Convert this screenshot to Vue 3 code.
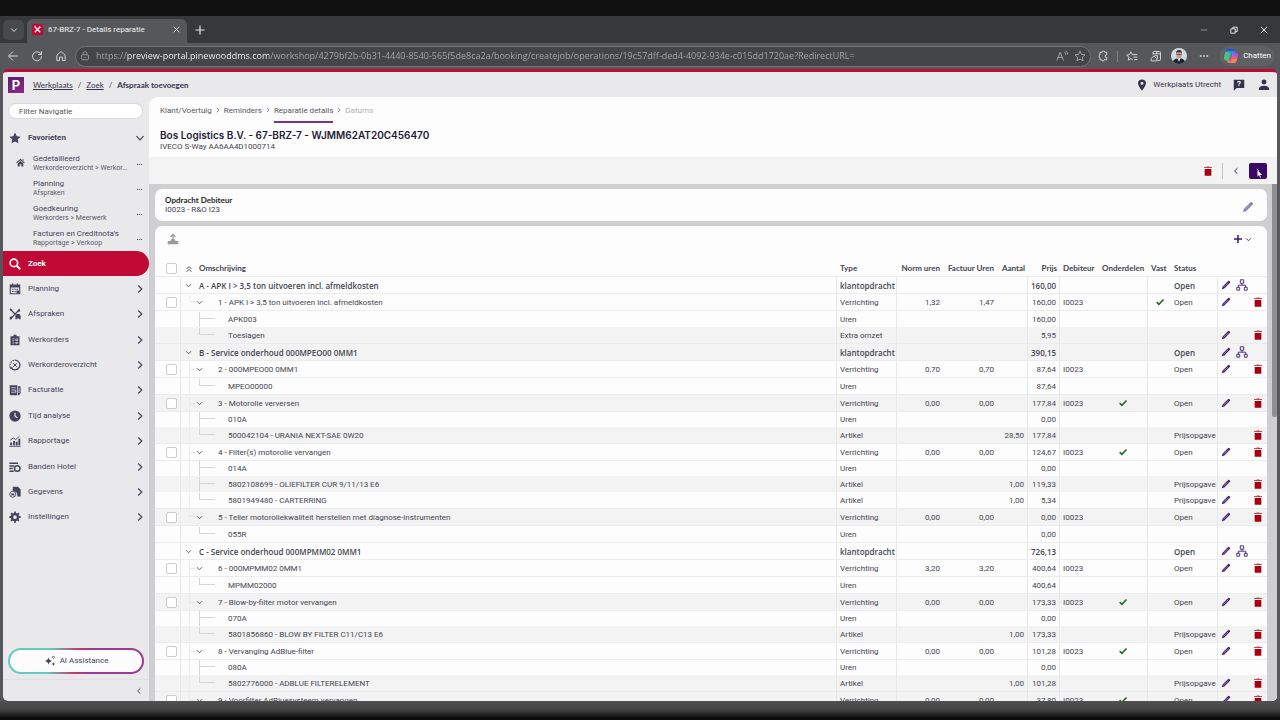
<script setup>
import { ref } from 'vue';

const url = 'https://preview-portal.pinewooddms.com/workshop/4279bf2b-0b31-4440-8540-565f5de8ca2a/booking/createjob/operations/19c57dff-ded4-4092-934e-c015dd1720ae?RedirectURL=';

const filter = ref('');

const favorites = [
  { title: 'Gedetailleerd', path: 'Werkorderoverzicht > Werkorders', home: true },
  { title: 'Planning', path: 'Afspraken' },
  { title: 'Goedkeuring', path: 'Werkorders > Meerwerk' },
  { title: "Facturen en Creditnota's", path: 'Rapportage > Verkoop' }
];

const navItems = [
  { label: 'Zoek', icon: 'search', active: true },
  { label: 'Planning', icon: 'calendar' },
  { label: 'Afspraken', icon: 'tools' },
  { label: 'Werkorders', icon: 'clipboard' },
  { label: 'Werkorderoverzicht', icon: 'overview' },
  { label: 'Facturatie', icon: 'invoice' },
  { label: 'Tijd analyse', icon: 'clock' },
  { label: 'Rapportage', icon: 'chart' },
  { label: 'Banden Hotel', icon: 'tyres' },
  { label: 'Gegevens', icon: 'data' },
  { label: 'Instellingen', icon: 'gear' }
];

const steps = [
  { label: 'Klant/Voertuig' },
  { label: 'Reminders' },
  { label: 'Reparatie details', active: true },
  { label: 'Datums', disabled: true }
];

const group = (text, price, extra = {}) => ({ kind: 'group', text, type: 'klantopdracht', price, status: 'Open', edit: true, tree: true, ...extra });
const job = (text, norm, invoiced, price, extra = {}) => ({ kind: 'job', text, type: 'Verrichting', norm, invoiced, price, debtor: 'I0023', status: 'Open', edit: true, del: true, ...extra });
const hours = (text, price, extra = {}) => ({ kind: 'hours', text, type: 'Uren', price, ...extra });
const part = (text, amount, price, extra = {}) => ({ kind: 'part', text, type: 'Artikel', amount, price, status: 'Prijsopgave', edit: true, del: true, ...extra });

// trunk: line down from the group, end: last child of its job
const rows = [
  group('A - APK I > 3,5 ton uitvoeren incl. afmeldkosten', '160,00'),
  job('1 - APK I > 3,5 ton uitvoeren incl. afmeldkosten', '1,32', '1,47', '160,00', { fixed: true, last: true }),
  hours('APK003', '160,00'),
  part('Toeslagen', '', '5,95', { type: 'Extra omzet', status: '', end: true, shade: true }),
  group('B - Service onderhoud 000MPEO00 0MM1', '390,15', { shade: true }),
  job('2 - 000MPEO00 0MM1', '0,70', '0,70', '87,64'),
  hours('MPEO00000', '87,64', { trunk: true, end: true }),
  job('3 - Motorolie verversen', '0,00', '0,00', '177,84', { parts: true, shade: true }),
  hours('010A', '0,00', { trunk: true }),
  part('500042104 - URANIA NEXT-SAE 0W20', '28,50', '177,84', { trunk: true, end: true, edit: false, shade: true }),
  job('4 - Filter(s) motorolie vervangen', '0,00', '0,00', '124,67', { parts: true }),
  hours('014A', '0,00', { trunk: true }),
  part('5802108699 - OLIEFILTER CUR 9/11/13 E6', '1,00', '119,33', { trunk: true, shade: true }),
  part('5801949480 - CARTERRING', '1,00', '5,34', { trunk: true, end: true }),
  job('5 - Teller motoroliekwaliteit herstellen met diagnose-instrumenten', '0,00', '0,00', '0,00', { last: true, shade: true }),
  hours('055R', '0,00', { end: true }),
  group('C - Service onderhoud 000MPMM02 0MM1', '726,13'),
  job('6 - 000MPMM02 0MM1', '3,20', '3,20', '400,64'),
  hours('MPMM02000', '400,64', { trunk: true, end: true }),
  job('7 - Blow-by-filter motor vervangen', '0,00', '0,00', '173,33', { parts: true, shade: true }),
  hours('070A', '0,00', { trunk: true }),
  part('5801856860 - BLOW BY FILTER C11/C13 E6', '1,00', '173,33', { trunk: true, end: true, shade: true }),
  job('8 - Vervanging AdBlue-filter', '0,00', '0,00', '101,28', { parts: true }),
  hours('080A', '0,00', { trunk: true }),
  part('5802776000 - ADBLUE FILTERELEMENT', '1,00', '101,28', { trunk: true, end: true, shade: true }),
  job('9 - Voorfilter AdBluesysteem vervangen', '0,00', '0,00', '37,80', { parts: true, shade: true })
];
</script>

<template>
  <div class="desktop">
    <svg class="sprite" aria-hidden="true">
      <symbol id="chev-down" viewBox="0 0 10 10"><path d="M1.5 3.2 5 6.8l3.500-3.600" class="ln" /></symbol>
      <symbol id="chev-right" viewBox="0 0 10 10"><path d="M3.200 1.500 6.800 5 3.200 8.500" class="ln" /></symbol>
      <symbol id="chev-left" viewBox="0 0 10 10"><path d="M6.800 1.500 3.200 5l3.600 3.500" class="ln" /></symbol>
      <symbol id="chev-up2" viewBox="0 0 10 10"><path d="M2 5l3-3 3 3M2 8.500l3-3 3 3" class="ln" /></symbol>
      <symbol id="close" viewBox="0 0 10 10"><path d="M1 1l8 8M9 1 1 9" class="ln" /></symbol>
      <symbol id="plus" viewBox="0 0 10 10"><path d="M5 .5v9M.5 5h9" class="ln" /></symbol>
      <symbol id="plus-bold" viewBox="0 0 8 8"><path d="M4 0v8M0 4h8" stroke="currentColor" stroke-width="1.500" /></symbol>
      <symbol id="dots" viewBox="0 0 12 12"><path d="M1 5h2v2H1zM5 5h2v2H5zM9 5h2v2H9z" fill="currentColor" /></symbol>
      <symbol id="dots-small" viewBox="0 0 6 6"><path d="M0 4h1v1H0zM2 4h1v1H2zM4 4h1v1H4z" fill="currentColor" /></symbol>
      <symbol id="back" viewBox="0 0 16 16"><path d="M15 8H2M8 2 2 8l6 6" class="ln" /></symbol>
      <symbol id="reload" viewBox="0 0 16 16"><path d="M13.500 6A6 6 0 1 0 14 8.500M14 1.500V6H9.500" class="ln" /></symbol>
      <symbol id="house" viewBox="0 0 16 16"><path d="M2.500 7 8 2l5.500 5v7H10v-4.500H6V14H2.500z" class="ln" /></symbol>
      <symbol id="lock" viewBox="0 0 16 16"><rect x="2.500" y="6" width="11" height="8" rx="1.500" class="ln" /><path d="M5 6V4a3 3 0 0 1 6 0v2" class="ln" /><circle cx="8" cy="10" r="1" fill="currentColor" /></symbol>
      <symbol id="read" viewBox="0 0 16 16"><path d="M1 14 5.500 3 10 14M2.800 10h5.500M11 2.500q2 1.500 2 4M13 1q2.500 2 2.500 5" class="ln" /></symbol>
      <symbol id="star-line" viewBox="0 0 16 16"><path d="m8 1.500 2 4.300 4.700.6-3.500 3.200.9 4.700L8 12l-4.100 2.300.9-4.700L1.300 6.400 6 5.800z" class="ln" /></symbol>
      <symbol id="puzzle" viewBox="0 0 16 16"><path d="M4 3h3a1.700 1.700 0 0 1 3.400 0H13v3.500a1.800 1.800 0 1 0 0 3.500v3H9.500a1.700 1.700 0 0 1-3.400 0H4V10a1.800 1.800 0 0 1 0-3.500z" class="ln" /></symbol>
      <symbol id="fav-list" viewBox="0 0 16 16"><path d="M9 13 6.500 11.500 3 13.500l.8-4L1 6.700l3.700-.5L6.500 2.500l1.800 3.700H15M10 9.500h5M11 12.800h4" class="ln" /></symbol>
      <symbol id="app-open" viewBox="0 0 16 16"><path d="M4 6V3.500Q4 2 5.500 2h7Q14 2 14 3.500v9q0 1.500-1.500 1.500H10M4 5h10M9 2v3" class="ln" /><path d="M1.500 14.500v-3L5 8l4 3.500v3zM6 7.500h4v4" class="ln" /></symbol>
      <symbol id="minimize" viewBox="0 0 10 10"><path d="M1 5h8" class="ln" /></symbol>
      <symbol id="restore" viewBox="0 0 10 10"><path d="M1 3.500h5.500V9H1zM3.500 3.500v-2H9V7H6.500" class="ln" /></symbol>
      <symbol id="star" viewBox="0 0 16 16"><path d="m8 .8 2.300 4.700 5.200.7-3.800 3.600.9 5.200L8 12.500 3.400 15l.9-5.200L.5 6.200l5.200-.7z" fill="currentColor" /></symbol>
      <symbol id="home" viewBox="0 0 16 16"><path d="M8 1.500 15.500 8l-1.200 1.300L8 4 1.700 9.300.5 8zM8 5.500l5 4.200V15H9.500v-4h-3v4H3V9.700zM11.500 2h2v3l-2-1.700z" fill="currentColor" /></symbol>
      <symbol id="search" viewBox="0 0 16 16"><circle cx="6.500" cy="6.500" r="5" fill="none" stroke="currentColor" stroke-width="2.200" /><path d="m10.300 10.300 4.700 4.700" stroke="currentColor" stroke-width="2.600" /></symbol>
      <symbol id="calendar" viewBox="0 0 16 16"><path d="M1 2h3V.5h1.500V2h5V.5H12V2h3v13H1zm1.500 4v7.500h11V6z" fill="currentColor" fill-rule="evenodd" /><path d="M4 7.500h2V9H4zm3 0h2V9H7zm3 0h2V9h-2zm-6 3h2V12H4zm3 0h2V12H7zm3-.5h3.500v3.500H10z" fill="currentColor" /></symbol>
      <symbol id="tools" viewBox="0 0 16 16"><path d="m2 2 7 7M14 2 3 13.500" stroke="currentColor" stroke-width="1.600" fill="none" /><path d="M.5 1.500 2 .5l2.500 2.300-1.500 1.500zM11.500 2.500 14.500.5 13.500 3l2 .5-3 2zM1 12l2.500-1 1 1-1 3-2.500.5zM8.500 10.500 10 8h4l1.500 2.500v4.500h-2v-1h-3v1h-2z" fill="currentColor" /></symbol>
      <symbol id="clipboard" viewBox="0 0 16 16"><path d="M2 3h4V1h4v2h4v12H2z" fill="currentColor" /><path d="M4.500 6.500h3M4.500 9h2.500M4.500 12H7M9 6.500h2.500v2.300H9zM9 11h2.500v1.500H9z" stroke="#e9e9ec" fill="none" stroke-width=".9" /></symbol>
      <symbol id="overview" viewBox="0 0 16 16"><path d="M1.500 8a6.500 6.500 0 0 1 6.500-6.500" fill="none" stroke="currentColor" stroke-width="1.500" stroke-dasharray="2 1.200" /><path d="M8 1.500A6.500 6.500 0 1 1 2.500 11.500" fill="none" stroke="currentColor" stroke-width="1.700" /><path d="m5.500 5.500 5 5M10.500 5.500l-5 5M1 9l1 3.500 3-1" stroke="currentColor" stroke-width="1.300" fill="none" /></symbol>
      <symbol id="invoice" viewBox="0 0 16 16"><path d="M1 1.500h10V15H2.500Q1 15 1 13.500zM12 3h2q1.500 0 1.500 1.500V12l-2 3H12z" fill="currentColor" /><path d="M3 5h6M3 8h6v3H3M13.500 5v7" stroke="#e9e9ec" stroke-width="1" fill="none" /></symbol>
      <symbol id="clock" viewBox="0 0 16 16"><circle cx="8" cy="8" r="7.500" fill="currentColor" /><path d="M8 3.500V8l3.200 2.500" stroke="#e9e9ec" stroke-width="1.600" fill="none" /></symbol>
      <symbol id="chart" viewBox="0 0 16 16"><path d="M1.500 10H4v4H1.500zM5.500 8H8v6H5.500zM9 9h2.500v5H9zM12.500 5H15v9h-2.500zM.5 14.500h15v1H.5z" fill="currentColor" /><path d="m1.500 7 4-3 3.500 2 5-4.500" stroke="currentColor" fill="none" stroke-width="1.200" /></symbol>
      <symbol id="tyres" viewBox="0 0 16 16"><path d="M.5 2H12v2H.5zM.5 5.500H7v2H.500zM.5 9h4.500v2H.5zM.500 12.500h6v2h-6z" fill="currentColor" /><circle cx="11" cy="10" r="3.700" fill="none" stroke="currentColor" stroke-width="2" /></symbol>
      <symbol id="data" viewBox="0 0 16 16"><path d="M5 1h7l3.500 3.500V14H11q1-7-6-7z" fill="currentColor" /><circle cx="5" cy="11" r="4" fill="none" stroke="currentColor" stroke-width="1.200" /><path d="M3 10h4v2.500H3z" fill="currentColor" /></symbol>
      <symbol id="gear" viewBox="0 0 16 16"><circle cx="8" cy="8" r="4" fill="none" stroke="currentColor" stroke-width="3" /><path d="M8 .5v3M8 12.500v3M.5 8h3M12.500 8h3M2.700 2.700l2 2M11.300 11.300l2 2M13.300 2.700l-2 2M4.700 11.300l-2 2" stroke="currentColor" stroke-width="2.400" /></symbol>
      <symbol id="sparkles" viewBox="0 0 16 16"><path d="M6 3q.7 4.300 5 5-4.300.7-5 5-.7-4.300-5-5 4.300-.7 5-5zM12.500 9.500q.4 2.100 2.500 2.500-2.100.4-2.500 2.500-.4-2.100-2.500-2.500 2.100-.4 2.500-2.500z" fill="currentColor" /><path d="M12.500 1.200 14.300 3l-1.800 1.800L10.700 3z" fill="none" stroke="currentColor" /></symbol>
      <symbol id="pin" viewBox="0 0 16 16"><path d="M8 .5a5.300 5.300 0 0 1 5.300 5.300C13.300 9.500 8 15.500 8 15.500S2.700 9.500 2.700 5.800A5.300 5.300 0 0 1 8 .5zm0 3.300a2 2 0 1 0 0 4 2 2 0 0 0 0-4z" fill="currentColor" /></symbol>
      <symbol id="bubble" viewBox="0 0 16 16"><path d="M1 1h14v11H5l-4 3.500z" fill="currentColor" /></symbol>
      <symbol id="person" viewBox="0 0 16 16"><circle cx="8" cy="4" r="3.300" fill="currentColor" /><path d="M1 14.500q0-5.500 7-5.500t7 5.500z" fill="currentColor" /></symbol>
      <symbol id="trash" viewBox="0 0 12 12"><path d="M2 3.500h8V11q0 .6-.6.6H2.600Q2 11.600 2 11z" fill="#a80010" /><path d="M1.300 1.300H4L4.600.6h2.800l.6.700h2.700v1.200H1.300z" fill="#c4414c" /></symbol>
      <symbol id="pencil" viewBox="0 0 12 12"><path d="M1 11l.8-3L8.600 1.200q.6-.5 1.200 0l1 1q.5.6 0 1.200L4 10.200z" fill="currentColor" /><path d="M3 8.800 8.500 3.300" stroke="#b9a9cc" stroke-width=".8" /></symbol>
      <symbol id="sitemap" viewBox="0 0 12 12"><path d="M4.300.8h3.400v3.400H4.300zM.8 8.300h2.900v2.900H.8zM8.300 8.300h2.900v2.900H8.300zM6 4.200v2M2.300 8.300V6.200h7.400v2.100" fill="none" stroke="currentColor" stroke-width=".9" /></symbol>
      <symbol id="check" viewBox="0 0 12 12"><path d="m2 6.200 2.700 2.600L10.200 3" fill="none" stroke="#1d6b23" stroke-width="1.900" /></symbol>
      <symbol id="upload" viewBox="0 0 12 12"><path d="M.8 8h2.700L4.500 6h3l1 2h2.700v3.300H.8z" fill="currentColor" /><path d="M6 8V1.500M3.500 4 6 1.400 8.500 4" fill="none" stroke="currentColor" stroke-width="1.300" /></symbol>
    </svg>

    <div class="browser">
      <div class="tab-strip">
        <button class="tab-menu" aria-label="Tabs"><svg class="ico8"><use href="#chev-down" /></svg></button>
        <div class="tab">
          <svg class="tab-logo" viewBox="0 0 12 12"><rect width="12" height="12" rx="1" fill="#c00a35" /><path d="M3 3l6 6M9 3 3 9" stroke="#fff" stroke-width="1.300" /><path d="M2.500 2.500h1.500M8 2.300l1.500 1.500" stroke="#fff" /></svg>
          <span class="tab-title">67-BRZ-7 - Details reparatie</span>
          <button class="plain" aria-label="Sluiten"><svg class="ico7"><use href="#close" /></svg></button>
        </div>
        <button class="plain new-tab" aria-label="Nieuw tabblad"><svg class="ico10"><use href="#plus" /></svg></button>
        <div class="window-buttons">
          <button class="plain dim" aria-label="Minimaliseren"><svg class="ico8"><use href="#minimize" /></svg></button>
          <button class="plain" aria-label="Herstellen"><svg class="ico8"><use href="#restore" /></svg></button>
          <button class="plain" aria-label="Venster sluiten"><svg class="ico8"><use href="#close" /></svg></button>
        </div>
      </div>

      <div class="address-bar">
        <button class="plain" aria-label="Terug"><svg class="ico12"><use href="#back" /></svg></button>
        <button class="plain" aria-label="Vernieuwen"><svg class="ico12"><use href="#reload" /></svg></button>
        <button class="plain" aria-label="Start"><svg class="ico12"><use href="#house" /></svg></button>
        <div class="url-box">
          <svg class="ico10"><use href="#lock" /></svg>
          <input class="url-input" type="text" :value="url" aria-label="Adres" readonly />
          <svg class="ico12"><use href="#read" /></svg>
          <svg class="ico12"><use href="#star-line" /></svg>
        </div>
        <button class="plain" aria-label="Extensies"><svg class="ico12"><use href="#puzzle" /></svg></button>
        <span class="bar-split"></span>
        <button class="plain" aria-label="Favorieten"><svg class="ico12"><use href="#fav-list" /></svg></button>
        <button class="plain" aria-label="App"><svg class="ico12"><use href="#app-open" /></svg></button>
        <svg class="avatar" viewBox="0 0 16 16">
          <clipPath id="face"><circle cx="8" cy="8" r="8" /></clipPath>
          <g clip-path="url(#face)">
            <rect width="16" height="16" fill="#cfdbe4" />
            <path d="M1 16q1-5 5-5.500h4q4 .5 5 5.500z" fill="#1c2330" />
            <path d="M6.500 10h3L8 14z" fill="#f4f4f4" />
            <ellipse cx="8" cy="6.800" rx="2.700" ry="3.600" fill="#c99a86" />
            <path d="M5 6q-.3-4 3-4t3 4l-.8-1.800H5.800z" fill="#3a2a26" />
            <path d="M5.500 6.500h5" stroke="#444" stroke-width=".7" />
          </g>
        </svg>
        <button class="plain" aria-label="Meer"><svg class="ico10"><use href="#dots" /></svg></button>
        <button class="copilot">
          <svg class="copilot-logo" viewBox="0 0 16 16">
            <path d="M5 1h5q1.500 0 2 2l.5 2H9L6.500 12.500H3Q.5 12.500 1 9.500L2.500 3Q3 1 5 1z" fill="#2a8df0" />
            <path d="M2.500 3 1 9.500q-.5 3 2 3h2.500L7.500 5z" fill="#4fc26b" />
            <path d="M5 1h5q1.500 0 2 2H5.500L2.500 4Q3 1 5 1z" fill="#2456d8" />
            <path d="M11 15H6q-1.500 0-2-2l-.2-.5H7L9.500 5H13q2.500 0 2 2.500L13.500 13q-.5 2-2.500 2z" fill="#e557a6" />
            <path d="M4 12.500h3L6.500 15H6q-1.500 0-2-2.500zM11 15H7l2.500-4 4.500-.5-.5 2.500q-.5 2-2.500 2z" fill="#f58a3c" />
            <path d="M9.500 5H13q2.500 0 2 2.500L14.500 9 10 7z" fill="#8f5be8" />
          </svg>
          <span>Chatten</span>
        </button>
      </div>

      <div class="app">
        <header class="app-header">
          <span class="logo">P</span>
          <nav class="crumbs">
            <a href="#">Werkplaats</a><span>/</span><a href="#">Zoek</a><span>/</span><strong>Afspraak toevoegen</strong>
          </nav>
          <div class="header-tools">
            <svg class="ico12"><use href="#pin" /></svg>
            <span class="location">Werkplaats Utrecht</span>
            <button class="plain help" aria-label="Help"><svg class="ico12"><use href="#bubble" /></svg><span>?</span></button>
            <button class="plain" aria-label="Gebruiker"><svg class="ico12"><use href="#person" /></svg></button>
          </div>
        </header>

        <div class="app-body">
          <aside class="sidebar">
            <input v-model="filter" class="nav-filter" type="text" placeholder="Filter Navigatie" aria-label="Filter Navigatie" />
            <button class="fav-toggle">
              <svg class="ico12"><use href="#star" /></svg>
              <span>Favorieten</span>
              <svg class="ico10"><use href="#chev-down" /></svg>
            </button>
            <ul class="fav-list">
              <li v-for="fav in favorites" :key="fav.title">
                <span class="fav-mark"><svg v-if="fav.home" class="ico9"><use href="#home" /></svg></span>
                <a href="#">
                  <span class="fav-title">{{ fav.title }}</span>
                  <span class="fav-path">{{ fav.path }}</span>
                </a>
                <button class="plain" :aria-label="'Opties ' + fav.title"><svg class="ico6"><use href="#dots-small" /></svg></button>
              </li>
            </ul>
            <nav class="nav-list">
              <a v-for="item in navItems" :key="item.label" href="#" :class="['nav-item', { active: item.active }]">
                <svg class="ico12"><use :href="'#' + item.icon" /></svg>
                <span>{{ item.label }}</span>
                <svg v-if="!item.active" class="ico10"><use href="#chev-right" /></svg>
              </a>
            </nav>
            <div class="assist-box">
              <button class="assist"><svg class="ico12"><use href="#sparkles" /></svg>AI Assistance</button>
            </div>
            <div class="side-foot">
              <button class="plain" aria-label="Menu inklappen"><svg class="ico8"><use href="#chev-left" /></svg></button>
            </div>
          </aside>

          <main class="main">
            <div class="page-head">
              <nav class="steps">
                <template v-for="(step, i) in steps" :key="step.label">
                  <svg v-if="i" class="ico6"><use href="#chev-right" /></svg>
                  <a href="#" :class="{ active: step.active, disabled: step.disabled }">{{ step.label }}</a>
                </template>
              </nav>
              <h1>Bos Logistics B.V. - 67-BRZ-7 - WJMM62AT20C456470</h1>
              <p>IVECO S-Way AA6AA4D1000714</p>
            </div>

            <div class="action-bar">
              <button class="plain" aria-label="Verwijderen"><svg class="ico10"><use href="#trash" /></svg></button>
              <span class="action-split"></span>
              <button class="plain prev" aria-label="Vorige"><svg class="ico8"><use href="#chev-left" /></svg></button>
              <button class="next" aria-label="Volgende">
                <svg class="ico6"><use href="#chev-right" /></svg>
                <svg class="cursor" viewBox="0 0 8 12"><path d="M.5.5v9l2.200-1.800 1.400 3.500 1.500-.6-1.500-3.300h3z" fill="#fff" stroke="#222" stroke-width=".4" /></svg>
              </button>
            </div>

            <div class="content">
              <div class="cards">
                <section class="card debtor">
                  <div>
                    <h2>Opdracht Debiteur</h2>
                    <p>I0023 - R&amp;O I23</p>
                  </div>
                  <button class="plain edit-debtor" aria-label="Bewerken"><svg class="ico12"><use href="#pencil" /></svg></button>
                </section>

                <section class="card jobs">
                  <div class="jobs-bar">
                    <button class="plain upload" aria-label="Uploaden"><svg class="ico12"><use href="#upload" /></svg></button>
                    <button class="plain add" aria-label="Toevoegen"><svg class="ico8"><use href="#plus-bold" /></svg><svg class="ico7"><use href="#chev-down" /></svg></button>
                  </div>
                  <table>
                    <colgroup>
                      <col class="c-check" /><col /><col class="c-type" /><col class="c-norm" /><col class="c-fact" /><col class="c-amount" />
                      <col class="c-price" /><col class="c-debtor" /><col class="c-parts" /><col class="c-fixed" /><col class="c-status" /><col class="c-actions" />
                    </colgroup>
                    <thead>
                      <tr>
                        <th class="check"><input type="checkbox" aria-label="Alles selecteren" /></th>
                        <th><div class="tree"><span class="toggle"><svg class="ico8"><use href="#chev-up2" /></svg></span>Omschrijving</div></th>
                        <th>Type</th>
                        <th class="num">Norm uren</th>
                        <th class="num">Factuur Uren</th>
                        <th class="num">Aantal</th>
                        <th class="num">Prijs</th>
                        <th>Debiteur</th>
                        <th>Onderdelen</th>
                        <th>Vast</th>
                        <th>Status</th>
                        <th></th>
                      </tr>
                    </thead>
                    <tbody>
                      <tr v-for="(row, i) in rows" :key="i" :class="[row.kind, { shade: row.shade }]">
                        <td class="check line"><input v-if="row.kind === 'job'" type="checkbox" :aria-label="row.text" /></td>
                        <td class="line">
                          <div class="tree">
                            <button v-if="row.kind === 'group'" class="plain toggle" aria-label="Inklappen"><svg class="ico7"><use href="#chev-down" /></svg></button>
                            <template v-else-if="row.kind === 'job'">
                              <span :class="['trunk joint', { half: row.last }]"></span>
                              <button class="plain toggle job-toggle" aria-label="Inklappen"><svg class="ico7"><use href="#chev-down" /></svg></button>
                            </template>
                            <template v-else>
                              <span :class="['trunk', { empty: !row.trunk }]"></span>
                              <span :class="['branch', { half: row.end }]"></span>
                            </template>
                            <span>{{ row.text }}</span>
                          </div>
                        </td>
                        <td class="line">{{ row.type }}</td>
                        <td class="num">{{ row.norm }}</td>
                        <td class="num">{{ row.invoiced }}</td>
                        <td class="num line">{{ row.amount }}</td>
                        <td class="num line">{{ row.price }}</td>
                        <td>{{ row.debtor }}</td>
                        <td class="mark line"><svg v-if="row.parts" class="ico10"><use href="#check" /></svg></td>
                        <td class="mark"><svg v-if="row.fixed" class="ico10"><use href="#check" /></svg></td>
                        <td class="line">{{ row.status }}</td>
                        <td class="actions">
                          <div>
                            <button v-if="row.edit" class="plain a-edit" aria-label="Bewerken"><svg class="ico10"><use href="#pencil" /></svg></button>
                            <button v-if="row.tree" class="plain a-tree" aria-label="Structuur"><svg class="ico12"><use href="#sitemap" /></svg></button>
                            <button v-if="row.del" class="plain a-del" aria-label="Verwijderen"><svg class="ico10"><use href="#trash" /></svg></button>
                          </div>
                        </td>
                      </tr>
                    </tbody>
                  </table>
                </section>
              </div>
              <div class="scrollbar"><div class="thumb"></div></div>
            </div>
          </main>
        </div>
      </div>
    </div>
  </div>
</template>

<style>
body {
  margin: 0;
  background: #111;
}
</style>

<style scoped>
.desktop {
  height: 100vh;
  box-sizing: border-box;
  padding: 16px 0 0;
  display: flex;
  flex-direction: column;
  background: #111;
  color: #45454f;
  font: 8px/12px Roboto, "Open Sans", sans-serif;
}

.desktop *,
.desktop *::before {
  box-sizing: border-box;
}

.sprite {
  display: none;
}

.ln {
  fill: none;
  stroke: currentColor;
  stroke-width: 1.2;
}

svg {
  display: block;
  flex: none;
}

.ico6 { width: 6px; height: 6px; }
.ico7 { width: 7px; height: 7px; }
.ico8 { width: 8px; height: 8px; }
.ico9 { width: 9px; height: 9px; }
.ico10 { width: 10px; height: 10px; }
.ico12 { width: 12px; height: 12px; }

button,
input {
  font: inherit;
  color: inherit;
}

a {
  color: inherit;
  text-decoration: none;
}

h1,
h2,
p,
ul {
  margin: 0;
  padding: 0;
}

.plain {
  display: flex;
  align-items: center;
  justify-content: center;
  padding: 0;
  border: none;
  background: none;
}

/* Browser */
.browser {
  flex: 1;
  min-height: 0;
  display: flex;
  flex-direction: column;
  padding-bottom: 19px;
  background: linear-gradient(to top, #0c0c0c 2px, #484848 11px, #4f5052 19px, #55575a 22px);
}

.tab-strip {
  display: flex;
  align-items: center;
  height: 27px;
  padding: 3px 10px 0 3px;
  background: #37383a;
  color: #e6e6e6;
}

.tab-menu {
  display: flex;
  align-items: center;
  justify-content: center;
  width: 21px;
  height: 20px;
  margin-bottom: 3px;
  padding: 0;
  border: none;
  border-radius: 5px;
  background: #47494c;
}

.tab {
  display: flex;
  align-items: center;
  gap: 5px;
  width: 160px;
  height: 24px;
  margin-left: 3px;
  padding: 0 7px 3px 5px;
  border-radius: 6px 6px 0 0;
  background: #55575a;
}

.tab-logo {
  width: 11px;
  height: 11px;
}

.tab-title {
  flex: 1;
  color: #f2f2f2;
}

.new-tab {
  margin: 0 0 3px 8px;
}

.window-buttons {
  display: flex;
  gap: 22px;
  margin: 0 2px 3px auto;
}

.dim {
  color: #999;
}

.address-bar {
  display: flex;
  align-items: center;
  height: 26px;
  padding: 0 5px 0 7px;
  gap: 12px;
  background: #55575a;
  color: #e0e0e0;
}

.url-box {
  flex: 1;
  display: flex;
  align-items: center;
  gap: 6px;
  height: 21px;
  margin: 0 -6px 0 -4px;
  padding: 0 4px;
  border: 1px solid #727477;
  border-radius: 11px;
  background: #434548;
  color: #adadad;
}

.url-input {
  flex: 1;
  min-width: 0;
  padding: 0;
  border: none;
  outline: none;
  font: 9px/12px "Open Sans", sans-serif;
  background: linear-gradient(to right, #aaa 30px, #fff 30px, #fff 173px, #aaa 173px);
  background-clip: text;
  color: transparent;
}

.bar-split {
  width: 1px;
  height: 11px;
  margin: 0 -4px;
  background: #808285;
}

.avatar {
  width: 16px;
  height: 16px;
  margin-left: -3px;
}

.copilot {
  display: flex;
  align-items: center;
  gap: 4px;
  height: 20px;
  margin-left: -2px;
  padding: 0 4px;
  border: none;
  border-radius: 10px;
  background: #5e6063;
  color: #fff;
}

.copilot-logo {
  width: 16px;
  height: 16px;
}

/* App shell */
.app {
  flex: 1;
  min-height: 0;
  display: flex;
  flex-direction: column;
  margin: 0 3px;
  border-top: 3px solid #b90d35;
  border-radius: 5px;
  background: #e9e9ec;
  overflow: hidden;
}

.app-header {
  display: flex;
  align-items: center;
  flex: none;
  height: 25px;
  padding: 0 7px 0 5px;
  color: #37324a;
}

.logo {
  width: 16px;
  height: 16px;
  background: linear-gradient(160deg, #5a1e66, #8b2c86);
  color: #fff;
  font: 700 13px/16px Inter, sans-serif;
  text-align: center;
}

.crumbs {
  display: flex;
  gap: 5px;
  margin-left: 9px;
  font-family: Lato, sans-serif;
}

.crumbs a {
  text-decoration: underline;
}

.header-tools {
  display: flex;
  align-items: center;
  margin-left: auto;
}

.location {
  margin: 0 12px 0 5px;
}

.help {
  display: grid;
  margin-right: 13px;
}

.help > * {
  grid-area: 1 / 1;
}

.help span {
  color: #fff;
  font-weight: 700;
  line-height: 10px;
  align-self: start;
}

.app-body {
  flex: 1;
  min-height: 0;
  display: flex;
}

/* Sidebar */
.sidebar {
  display: flex;
  flex-direction: column;
  width: 146px;
  flex: none;
  color: #45435a;
}

.nav-filter {
  height: 16px;
  flex: none;
  margin: 6px 6px 0 5px;
  padding: 0 10px;
  border: 1px solid #d9d9de;
  border-radius: 8px;
  outline: none;
  background: #fff;
}

.nav-filter::placeholder {
  color: #55545f;
  opacity: 1;
}

.fav-toggle,
.nav-item {
  display: flex;
  align-items: center;
  gap: 7px;
  padding: 0 4px 0 6px;
  border: none;
  background: none;
  text-align: left;
}

.fav-toggle > span,
.nav-item > span {
  flex: 1;
}

.fav-toggle {
  height: 25px;
  flex: none;
  margin-top: 6px;
  font-weight: 700;
}

.fav-list {
  display: grid;
  grid-template-columns: minmax(0, 1fr);
  grid-auto-rows: 1fr;
  flex: none;
  height: 101px;
  list-style: none;
}

.fav-list li {
  display: flex;
  align-items: center;
  padding: 0 6px 0 13px;
}

.fav-list a {
  flex: 1;
  min-width: 0;
  display: flex;
  flex-direction: column;
}

.fav-mark {
  width: 17px;
}

.fav-title {
  line-height: 10px;
}

.fav-path {
  margin-right: 8px;
  color: #5c5a6c;
  font-size: 7px;
  line-height: 8px;
  white-space: nowrap;
  overflow: hidden;
  text-overflow: ellipsis;
}

.nav-list {
  display: grid;
  grid-auto-rows: 1fr;
  flex: none;
  height: 279px;
}

.nav-item.active {
  border-radius: 0 13px 13px 0;
  background: #c00a35;
  color: #fff;
  font-weight: 700;
}

.assist-box {
  margin-top: auto;
  padding: 7px 5px 5px;
}

.assist {
  display: flex;
  align-items: center;
  justify-content: center;
  gap: 4px;
  width: 136px;
  height: 26px;
  border: 2px solid transparent;
  border-radius: 13px;
  background:
    linear-gradient(#fcfcfd, #fcfcfd) padding-box,
    linear-gradient(100deg, #62cdbd 30%, #c23a6b 50%, #9a3a92 60%) border-box;
}

.side-foot {
  display: flex;
  align-items: center;
  justify-content: flex-end;
  height: 22px;
  padding-right: 6px;
  border-top: 1px solid #e0e0e4;
}

/* Page */
.main {
  flex: 1;
  min-width: 0;
  display: flex;
  flex-direction: column;
  border-radius: 9px 0 0 0;
  background: #fdfdfd;
  overflow: hidden;
}

.page-head {
  flex: none;
  height: 60px;
  padding: 0 11px;
}

.steps {
  display: flex;
  align-items: center;
  gap: 3px;
  height: 26px;
  color: #5a5863;
}

.steps a {
  height: 26px;
  line-height: 27px;
}

.steps a.active {
  border-bottom: 2px solid #7c2f8e;
}

.steps a.disabled {
  color: #b3b1b8;
}

.page-head h1 {
  margin-top: 5px;
  color: #1f1b38;
  font: 600 10px/14px Inter, sans-serif;
}

.page-head p {
  line-height: 10px;
}

.action-bar {
  display: flex;
  align-items: center;
  justify-content: flex-end;
  flex: none;
  height: 27px;
  padding-right: 10px;
  background: #f3f3f3;
  color: #3d1a66;
}

.action-split {
  width: 1px;
  height: 16px;
  margin: 0 9px;
  background: #c4c4c8;
}

.next {
  position: relative;
  display: flex;
  align-items: center;
  justify-content: center;
  width: 18px;
  height: 16px;
  margin-left: 9px;
  padding: 0;
  border: none;
  border-radius: 2px;
  background: #3a0866;
  color: #fff;
}

.cursor {
  position: absolute;
  left: 8px;
  top: 6px;
  width: 6px;
  height: 10px;
}

.content {
  flex: 1;
  min-height: 0;
  display: flex;
  background: #cfcfd1;
}

.cards {
  flex: 1;
  min-width: 0;
  padding: 5px 5px 0 6px;
  overflow: hidden;
}

.scrollbar {
  width: 5px;
}

.thumb {
  height: 45%;
  background: #8f8f92;
  border-radius: 0 0 2px 2px;
}

.card {
  border-radius: 7px;
  background: #fdfdfd;
}

.debtor {
  display: flex;
  align-items: center;
  justify-content: space-between;
  height: 32px;
  padding: 0 13px 0 10px;
}

.debtor h2 {
  color: #1f1f24;
  font: 700 8px/10px Lato, sans-serif;
}

.debtor p {
  line-height: 10px;
}

.edit-debtor {
  color: #8d7fa6;
  padding-top: 4px;
}

.jobs {
  margin-top: 5px;
}

.jobs-bar {
  display: flex;
  align-items: center;
  justify-content: space-between;
  height: 35px;
  padding: 0 15px 9px 12px;
}

.upload {
  color: #9a9a9e;
}

.add {
  gap: 3px;
  color: #3d1a66;
}

/* Job table */
table {
  width: 100%;
  table-layout: fixed;
  border-collapse: separate;
  border-spacing: 0;
  line-height: 15px;
}

.c-check { width: 26px; }
.c-type { width: 60px; }
.c-norm { width: 46px; }
.c-fact { width: 54px; }
.c-amount { width: 31px; }
.c-price { width: 32px; }
.c-debtor { width: 39px; }
.c-parts { width: 49px; }
.c-fixed { width: 23px; }
.c-status { width: 47px; }
.c-actions { width: 49px; }

th,
td {
  height: 17px;
  padding: 0 3px;
  text-align: left;
  white-space: nowrap;
}

th {
  height: 15px;
  font-family: Lato, sans-serif;
  font-weight: 700;
}

td {
  border-top: 1px solid #ececee;
}

td.line {
  border-right: 1px solid #e8e8ea;
}

tr.part td {
  height: 16px;
  border-top: none;
}

/* hours line sits tight on the articles below it */
tr.hours:has(+ tr.part:not(:nth-child(4))) td {
  height: 16px;
}

tr.shade td {
  background: #f3f3f4;
}

tr.group td {
  font-family: "Open Sans", sans-serif;
  font-weight: 600;
}

th.num,
td.num {
  text-align: right;
}

th.check,
td.check {
  padding: 0 0 0 11px;
}

input[type='checkbox'] {
  appearance: none;
  display: block;
  width: 11px;
  height: 11px;
  margin: 0;
  border: 1px solid #cbcbd0;
  border-radius: 2px;
  background: #fff;
}

.mark svg {
  margin: 0 auto;
}

.tree {
  display: flex;
  align-items: center;
  height: 15px;
}

.toggle {
  display: flex;
  justify-content: center;
  width: 9px;
  margin-right: 6px;
}

.job-toggle {
  margin-right: 14px;
}

.trunk {
  align-self: stretch;
  width: 6px;
  margin-left: 5px;
  border-left: 1px solid #ededef;
}

.trunk.joint {
  background: linear-gradient(#e6e6e9, #e6e6e9) 0 7px / 5px 1px no-repeat;
}

.trunk.empty {
  border-color: transparent;
}

.branch {
  align-self: stretch;
  width: 16px;
  margin: 0 13px 0 4px;
  border-left: 1px solid #d6d6da;
  background: linear-gradient(#d6d6da, #d6d6da) 0 6px / 16px 1px no-repeat;
}

.trunk.half,
.branch.half {
  align-self: flex-start;
  height: 7px;
  background-position: 0 6px;
}

td.actions {
  padding: 0;
  color: #43206e;
}

.actions div {
  display: grid;
  grid-template-columns: repeat(3, 16px);
}

.a-edit { grid-column: 1; }
.a-tree { grid-column: 2; }
.a-del { grid-column: 3; grid-row: 1; }
</style>
